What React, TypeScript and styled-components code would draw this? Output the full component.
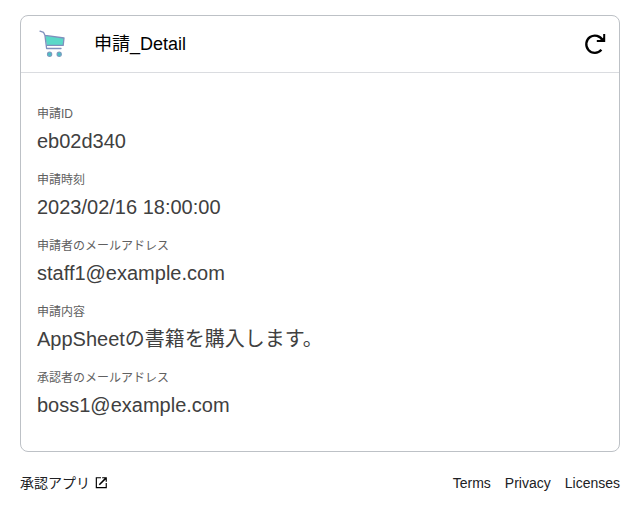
import React from "react";
import styled, { createGlobalStyle } from "styled-components";

const GlobalStyle = createGlobalStyle`
  * { box-sizing: border-box; }
  body {
    margin: 0;
    background: #fff;
    color: #000;
    font-family: "Liberation Sans", Arial, "Noto Sans CJK JP", sans-serif;
  }
`;

const Page = styled.div`
  padding: 15px 17px 12px 20px;
`;

const Card = styled.main`
  border: 1px solid #bdc1c6;
  border-radius: 8px;
  background: #fff;
`;

const Header = styled.header`
  display: flex;
  align-items: center;
  height: 57px;
  padding: 0 12px;
  border-bottom: 1px solid #dadce0;
`;

const Title = styled.h1`
  flex: 1;
  margin: 0 0 0 21px;
  font-size: 18px;
  line-height: 24px;
  font-weight: 400;
`;

const IconButton = styled.button`
  display: flex;
  padding: 0;
  border: 0;
  background: none;
  color: #000;
  cursor: pointer;
`;

const Fields = styled.dl`
  display: grid;
  gap: 15px;
  margin: 0;
  padding: 32px 16px 31px;
`;

const Field = styled.div`
  display: grid;
  gap: 3px;
`;

const Label = styled.dt`
  font-size: 12px;
  line-height: 18px;
  color: #606060;
`;

const Value = styled.dd`
  margin: 0;
  font-size: 20px;
  line-height: 30px;
  color: #404040;
`;

const Footer = styled.footer`
  display: flex;
  align-items: center;
  justify-content: space-between;
  margin-top: 21px;
  font-size: 14px;
  line-height: 20px;
`;

const Links = styled.nav`
  display: flex;
  gap: 14px;
`;

const FooterLink = styled.a`
  display: inline-flex;
  align-items: center;
  gap: 4px;
  color: #202124;
  text-decoration: none;
`;

const CartIcon = () => (
  <svg width="40" height="40" viewBox="0 0 40 40" fill="none" aria-hidden="true">
    <path d="M12.2 11.4 31 14 30.2 21.4 13.6 21.4Z" fill="#5bd8c8" />
    <path
      d="M7 7.2 10.6 8.4 11.9 11.2 13.6 24.5H28M12.2 11.4 31 14 30.2 21.4 13.4 21.4"
      stroke="#7f90bd"
      strokeWidth="1.3"
      strokeLinejoin="round"
      strokeLinecap="round"
    />
    <circle cx="16.6" cy="30.3" r="2.1" fill="#45c3c4" stroke="#7c9cbf" strokeWidth="1.2" />
    <circle cx="26.2" cy="30.3" r="2.1" fill="#45c3c4" stroke="#7c9cbf" strokeWidth="1.2" />
  </svg>
);

const RefreshIcon = () => (
  <svg width="24" height="24" viewBox="0 0 24 24" fill="none" aria-hidden="true">
    <path d="M18.4 17.8A8.6 8.6 0 1 1 19.6 8.4" stroke="currentColor" strokeWidth="2.3" />
    <path d="M22.2 2V10H13.8V8H17.8L20.2 5.6V2Z" fill="currentColor" />
  </svg>
);

const OpenIcon = () => (
  <svg width="14" height="14" viewBox="0 0 24 24" fill="#000" aria-hidden="true">
    <path d="M20 19H5V4h7V2H3v19h19v-9h-2v7zM14 2v2h4.2l-10 10 1.8 1.8L20 5.8V10h2V2h-8z" />
  </svg>
);

const fields = [
  { label: "申請ID", value: "eb02d340" },
  { label: "申請時刻", value: "2023/02/16 18:00:00" },
  { label: "申請者のメールアドレス", value: "staff1@example.com" },
  { label: "申請内容", value: "AppSheetの書籍を購入します。" },
  { label: "承認者のメールアドレス", value: "boss1@example.com" },
];

export default function App() {
  return (
    <>
      <GlobalStyle />
      <Page lang="ja">
        <Card>
          <Header>
            <CartIcon />
            <Title>申請_Detail</Title>
            <IconButton type="button" aria-label="Refresh">
              <RefreshIcon />
            </IconButton>
          </Header>
          <Fields>
            {fields.map((f) => (
              <Field key={f.label}>
                <Label>{f.label}</Label>
                <Value>{f.value}</Value>
              </Field>
            ))}
          </Fields>
        </Card>
        <Footer>
          <FooterLink href="#app">
            承認アプリ
            <OpenIcon />
          </FooterLink>
          <Links>
            <FooterLink href="#terms">Terms</FooterLink>
            <FooterLink href="#privacy">Privacy</FooterLink>
            <FooterLink href="#licenses">Licenses</FooterLink>
          </Links>
        </Footer>
      </Page>
    </>
  );
}
